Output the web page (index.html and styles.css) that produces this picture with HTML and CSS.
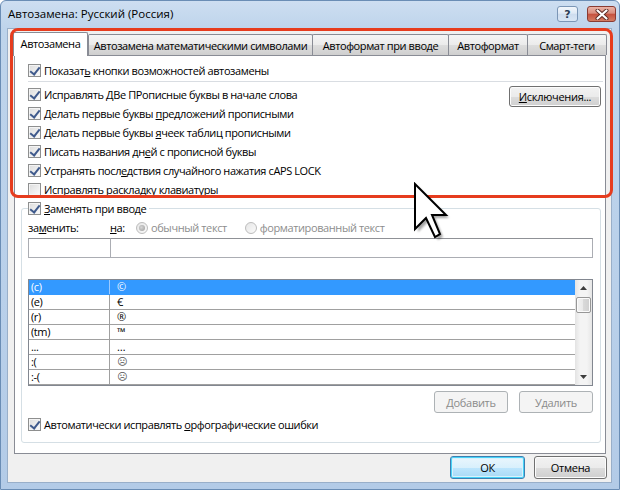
FILE: index.html
```html
<!DOCTYPE html>
<html lang="ru">
<head>
<meta charset="utf-8">
<title>Автозамена</title>
<link rel="stylesheet" href="styles.css">
</head>
<body>
<div class="window">
  <div class="titlebar">
    <span class="title">Автозамена: Русский (Россия)</span>
    <div class="caption-btns">
      <span class="cap help">?</span>
      <span class="cap close"><svg width="14" height="11" viewBox="0 0 14 11"><path d="M2.5 1.5 L11.5 9.5 M11.5 1.5 L2.5 9.5" stroke="#5a2a24" stroke-width="4" stroke-linecap="round"/><path d="M2.5 1.5 L11.5 9.5 M11.5 1.5 L2.5 9.5" stroke="#fff" stroke-width="2.2" stroke-linecap="round"/></svg></span>
    </div>
  </div>
  <div class="client">
    <div class="tabs">
      <div class="tab t1 active">Автозамена</div>
      <div class="tab t2">Автозамена математическими символами</div>
      <div class="tab t3">Автоформат при вводе</div>
      <div class="tab t4">Автоформат</div>
      <div class="tab t5">Смарт-теги</div>
    </div>
    <div class="panel">
      <div class="chk first"><span class="cb on"></span><span class="txt">Показат<u>ь</u> кнопки возможностей автозамены</span></div>
      <div class="sep"></div>
      <div class="opts">
        <div class="optlist">
          <div class="chk"><span class="cb on"></span><span class="txt">Исправлять ДВе ПРописные буквы в начале слова</span></div>
          <div class="chk"><span class="cb on"></span><span class="txt">Делать первые буквы <u>п</u>редложений прописными</span></div>
          <div class="chk"><span class="cb on"></span><span class="txt">Делать первые буквы <u>я</u>чеек таблиц прописными</span></div>
          <div class="chk"><span class="cb on"></span><span class="txt">Писать названия дн<u>е</u>й с прописной буквы</span></div>
          <div class="chk"><span class="cb on"></span><span class="txt">Устранять посл<u>е</u>дствия случайного нажатия cAPS LOCK</span></div>
          <div class="chk"><span class="cb"></span><span class="txt">Исправлять раскладку <u>к</u>лавиатуры</span></div>
        </div>
        <button class="btn exc"><span class="txt"><u>И</u>сключения...</span></button>
      </div>
      <fieldset class="group">
        <legend class="chk"><span class="cb on"></span><span class="txt"><u>З</u>аменять при вводе</span></legend>
        <div class="labels">
          <span class="l-rep">за<u>м</u>енить:</span>
          <span class="l-with"><u>н</u>а:</span>
          <span class="radio on"></span><span class="dis">обычный текст</span>
          <span class="radio r2"></span><span class="dis">форматированный текст</span>
        </div>
        <div class="inputs"><div class="inp i1"></div><div class="inp i2"></div></div>
        <div class="list">
          <div class="rows">
            <div class="lrow sel"><span class="c1">(c)</span><span class="c2">©</span></div>
            <div class="lrow"><span class="c1">(e)</span><span class="c2">€</span></div>
            <div class="lrow"><span class="c1">(r)</span><span class="c2">®</span></div>
            <div class="lrow"><span class="c1">(tm)</span><span class="c2">™</span></div>
            <div class="lrow"><span class="c1">...</span><span class="c2">…</span></div>
            <div class="lrow"><span class="c1">:(</span><span class="c2 face">☹</span></div>
            <div class="lrow"><span class="c1">:-(</span><span class="c2 face">☹</span></div>
          </div>
          <div class="scrollbar">
            <div class="sb-btn"><svg width="7" height="4" viewBox="0 0 7 4"><path d="M0 4 L3.5 0 L7 4 Z" fill="#3d3d3d"/></svg></div>
            <div class="sb-track"><div class="thumb"></div></div>
            <div class="sb-btn"><svg width="7" height="4" viewBox="0 0 7 4"><path d="M0 0 L3.5 4 L7 0 Z" fill="#3d3d3d"/></svg></div>
          </div>
        </div>
        <div class="listbtns">
          <button class="btn disabled">Добавить</button>
          <button class="btn disabled">Удалить</button>
        </div>
        <div class="chk last"><span class="cb on"></span><span class="txt">Автоматически исправлять <u>о</u>рфографические ошибки</span></div>
      </fieldset>
    </div>
    <div class="footer">
      <button class="btn default ok">ОК</button>
      <button class="btn cancel">Отмена</button>
    </div>
  </div>
  <div class="highlight"></div>
  <svg class="cursor" width="42" height="62" viewBox="0 0 42 62">
    <defs><filter id="sh" x="-20%" y="-20%" width="140%" height="140%"><feGaussianBlur stdDeviation="1.3"/></filter></defs>
    <path d="M5 5 L5 50 L16 39 L25 58 L30 55 L22 36 L36 36 Z" fill="#000" opacity="0.35" filter="url(#sh)"/>
    <path d="M2 2 L2 47 L13 36 L22 55 L27 52 L19 33 L33 33 Z" fill="#fff" stroke="#000" stroke-width="2" stroke-linejoin="miter"/>
  </svg>
</div>
</body>
</html>
```

FILE: styles.css
```css
* { box-sizing: border-box; }

body {
  margin: 0;
  width: 620px;
  height: 490px;
  overflow: hidden;
  font-family: "Open Sans", "Noto Sans", "DejaVu Sans", sans-serif;
  font-size: 11px;
  letter-spacing: -0.4px;
  color: #000;
  background: #fff;
}

u { text-decoration: underline; text-underline-offset: 1px; }

.txt { white-space: pre; }

.window {
  position: relative;
  width: 620px;
  height: 490px;
  background: linear-gradient(#cddef1, #bed4eb 28px, #b9d0ea 60%, #b3cbe7);
  border: 1px solid #6a8db5;
  border-radius: 6px 6px 0 0;
  padding: 0 7px 6px 6px;
  display: flex;
  flex-direction: column;
}

.titlebar {
  height: 27px;
  display: flex;
  align-items: flex-start;
  padding-left: 1px;
}

.title {
  font-size: 11.5px;
  letter-spacing: 0;
  margin-top: 5px;
  color: #000;
}

.caption-btns {
  margin-left: auto;
  margin-right: -4px;
  margin-top: 5px;
  display: flex;
  gap: 9px;
}

.cap {
  height: 16px;
  border-radius: 3px;
  display: flex;
  align-items: center;
  justify-content: center;
}

.help {
  width: 21px;
  border: 1px solid #7b96b6;
  background: linear-gradient(#f2f6fb, #dfe9f5 45%, #cddcee 50%, #d9e6f5);
  color: #2c3e56;
  font-family: "DejaVu Sans", sans-serif;
  font-weight: bold;
  font-size: 11px;
  letter-spacing: 0;
  line-height: 1;
}

.close {
  width: 29px;
  border: 1px solid #8a3b32;
  background: linear-gradient(#eab3a6, #d98c7c 45%, #c5503d 50%, #d47c62);
}

.client {
  flex: 1;
  background: #f0f0f0;
  border: 1px solid #99afc9;
  padding: 5px 5px 0 6px;
  display: flex;
  flex-direction: column;
}

.tabs {
  display: flex;
  height: 21px;
  position: relative;
  z-index: 2;
}

.tab {
  height: 21px;
  border: 1px solid #898c95;
  border-bottom: none;
  margin-right: -1px;
  background: linear-gradient(#f5f5f5, #ebebeb 50%, #dddddd 50%, #cfcfcf);
  display: flex;
  align-items: center;
  justify-content: center;
  white-space: nowrap;
  border-radius: 2px 2px 0 0;
}

.t1 { width: 75px; }
.t2 { width: 225px; }
.t3 { width: 137px; }
.t4 { width: 80px; }
.t5 { width: 80px; }

.tab.active {
  background: #fff;
  height: 24px;
  margin-top: -2px;
  margin-left: -1px;
  margin-right: 0;
  position: relative;
  z-index: 3;
  padding-bottom: 2px;
}

.panel {
  height: 399px;
  border: 1px solid #898c95;
  background: #fff;
  padding-top: 5px;
  display: flex;
  flex-direction: column;
}

.chk {
  height: 19px;
  display: flex;
  align-items: center;
  white-space: nowrap;
}

.panel > .chk.first,
.optlist .chk { padding-left: 13px; }

.cb {
  width: 13px;
  height: 13px;
  border: 1px solid #8e8f8f;
  background: linear-gradient(135deg, #dcdcdc, #fbfbfb);
  box-shadow: inset 0 0 0 1px #f4f4f4;
  margin-right: 3px;
  flex: none;
  position: relative;
}

.cb.on::after {
  content: "";
  position: absolute;
  left: 3px;
  top: 0px;
  width: 4px;
  height: 8px;
  border-right: 2px solid #3f5a8c;
  border-bottom: 2px solid #3f5a8c;
  transform: rotate(38deg);
}

.sep {
  height: 1px;
  background: #d9dde2;
  margin: 1px 2px 3px 13px;
}

.opts {
  display: flex;
  align-items: flex-start;
}

.optlist { flex: 1; }

.btn {
  font-family: inherit;
  font-size: 11px;
  letter-spacing: -0.3px;
  color: #000;
  border: 1px solid #707070;
  border-radius: 3px;
  background: linear-gradient(#f2f2f2, #ebebeb 50%, #dddddd 50%, #cfcfcf);
  box-shadow: inset 0 0 0 1px #fcfcfc;
  padding: 0;
  height: 22px;
  display: flex;
  align-items: center;
  justify-content: center;
}

.exc {
  width: 92px;
  height: 21px;
  margin-top: 1px;
  margin-right: 4px;
}

.group {
  margin: 0 4px 0 6px;
  border: 1px solid #d5dfe5;
  border-radius: 3px;
  padding: 0 7px 8px 6px;
  min-width: 0;
}

.group legend {
  padding: 0 3px 0 0;
  margin-left: 0;
}

.labels {
  height: 19px;
  display: flex;
  align-items: center;
  white-space: nowrap;
}

.l-rep { width: 82px; }
.l-with { width: 26px; }

.dis { color: #8d8d8d; }

.radio {
  width: 12px;
  height: 12px;
  border-radius: 50%;
  border: 1px solid #bcbcbc;
  background: linear-gradient(135deg, #e6e6e6, #fafafa);
  margin-right: 3px;
  position: relative;
  flex: none;
}

.radio.on::after {
  content: "";
  position: absolute;
  left: 2px;
  top: 2px;
  width: 6px;
  height: 6px;
  border-radius: 50%;
  background: radial-gradient(circle at 40% 40%, #d6d6d6, #9a9a9a);
}

.radio.r2 { margin-left: 18px; }

.inputs {
  display: flex;
  margin-top: 1px;
  height: 20px;
}

.inp {
  height: 20px;
  border: 1px solid #abadb3;
  border-top-color: #8f9196;
  background: #fff;
}

.i1 { width: 83px; }
.i2 { flex: 1; margin-left: -1px; }

.list {
  margin-top: 21px;
  height: 107px;
  border: 1px solid #828790;
  display: flex;
  background: #fff;
}

.rows { flex: 1; }

.lrow {
  height: 15px;
  display: flex;
  border-bottom: 1px solid #a0a0a0;
  line-height: 14px;
}

.lrow.sel {
  background: #3399ff;
  color: #fff;
  border-bottom-color: #3399ff;
}

.c1 {
  width: 81px;
  border-right: 1px solid #a0a0a0;
  padding-left: 2px;
}

.lrow.sel .c1 { border-right-color: #9ccaff; }

.c2 {
  flex: 1;
  padding-left: 7px;
}

.face {
  font-family: "DejaVu Sans", sans-serif;
  font-size: 10px;
  color: #555;
}

.scrollbar {
  width: 17px;
  background: linear-gradient(90deg, #e3e3e3, #f4f4f4 30%, #f4f4f4 70%, #e6e6e6);
  display: flex;
  flex-direction: column;
}

.sb-btn {
  height: 16px;
  display: flex;
  align-items: center;
  justify-content: center;
}

.sb-track {
  flex: 1;
  padding: 1px 1px 0 1px;
}

.thumb {
  height: 16px;
  border: 1px solid #979797;
  border-radius: 2px;
  background: linear-gradient(90deg, #f3f3f3, #e8e8e8 50%, #d9d9d9 50%, #cfcfcf);
  box-shadow: inset 0 0 0 1px #fbfbfb;
}

.listbtns {
  margin-top: 5px;
  display: flex;
  justify-content: flex-end;
  gap: 11px;
}

.listbtns .btn { width: 74px; }

.btn.disabled {
  color: #8b8b8b;
  border-color: #adb2b5;
  background: #f4f4f4;
  box-shadow: none;
}

.chk.last { margin-top: 2px; }

.footer {
  margin-top: 2px;
  margin-right: -1px;
  display: flex;
  justify-content: flex-end;
  gap: 9px;
}

.footer .btn { height: 23px; }
.ok { width: 75px; }
.cancel { width: 73px; }

.btn.default {
  border-color: #3c7fb1;
  box-shadow: inset 0 0 0 1px #48d2f8, inset 0 0 0 2px #d8f2fc;
  background: linear-gradient(#eaf6fd, #d9f0fc 50%, #bee6fd 50%, #a7d9f5);
}

.highlight {
  position: absolute;
  left: 9px;
  top: 27px;
  width: 603px;
  height: 170px;
  border: 3px solid #e63c1e;
  border-radius: 8px;
  pointer-events: none;
  z-index: 5;
}

.cursor {
  position: absolute;
  left: 412px;
  top: 181px;
  z-index: 6;
}
```
